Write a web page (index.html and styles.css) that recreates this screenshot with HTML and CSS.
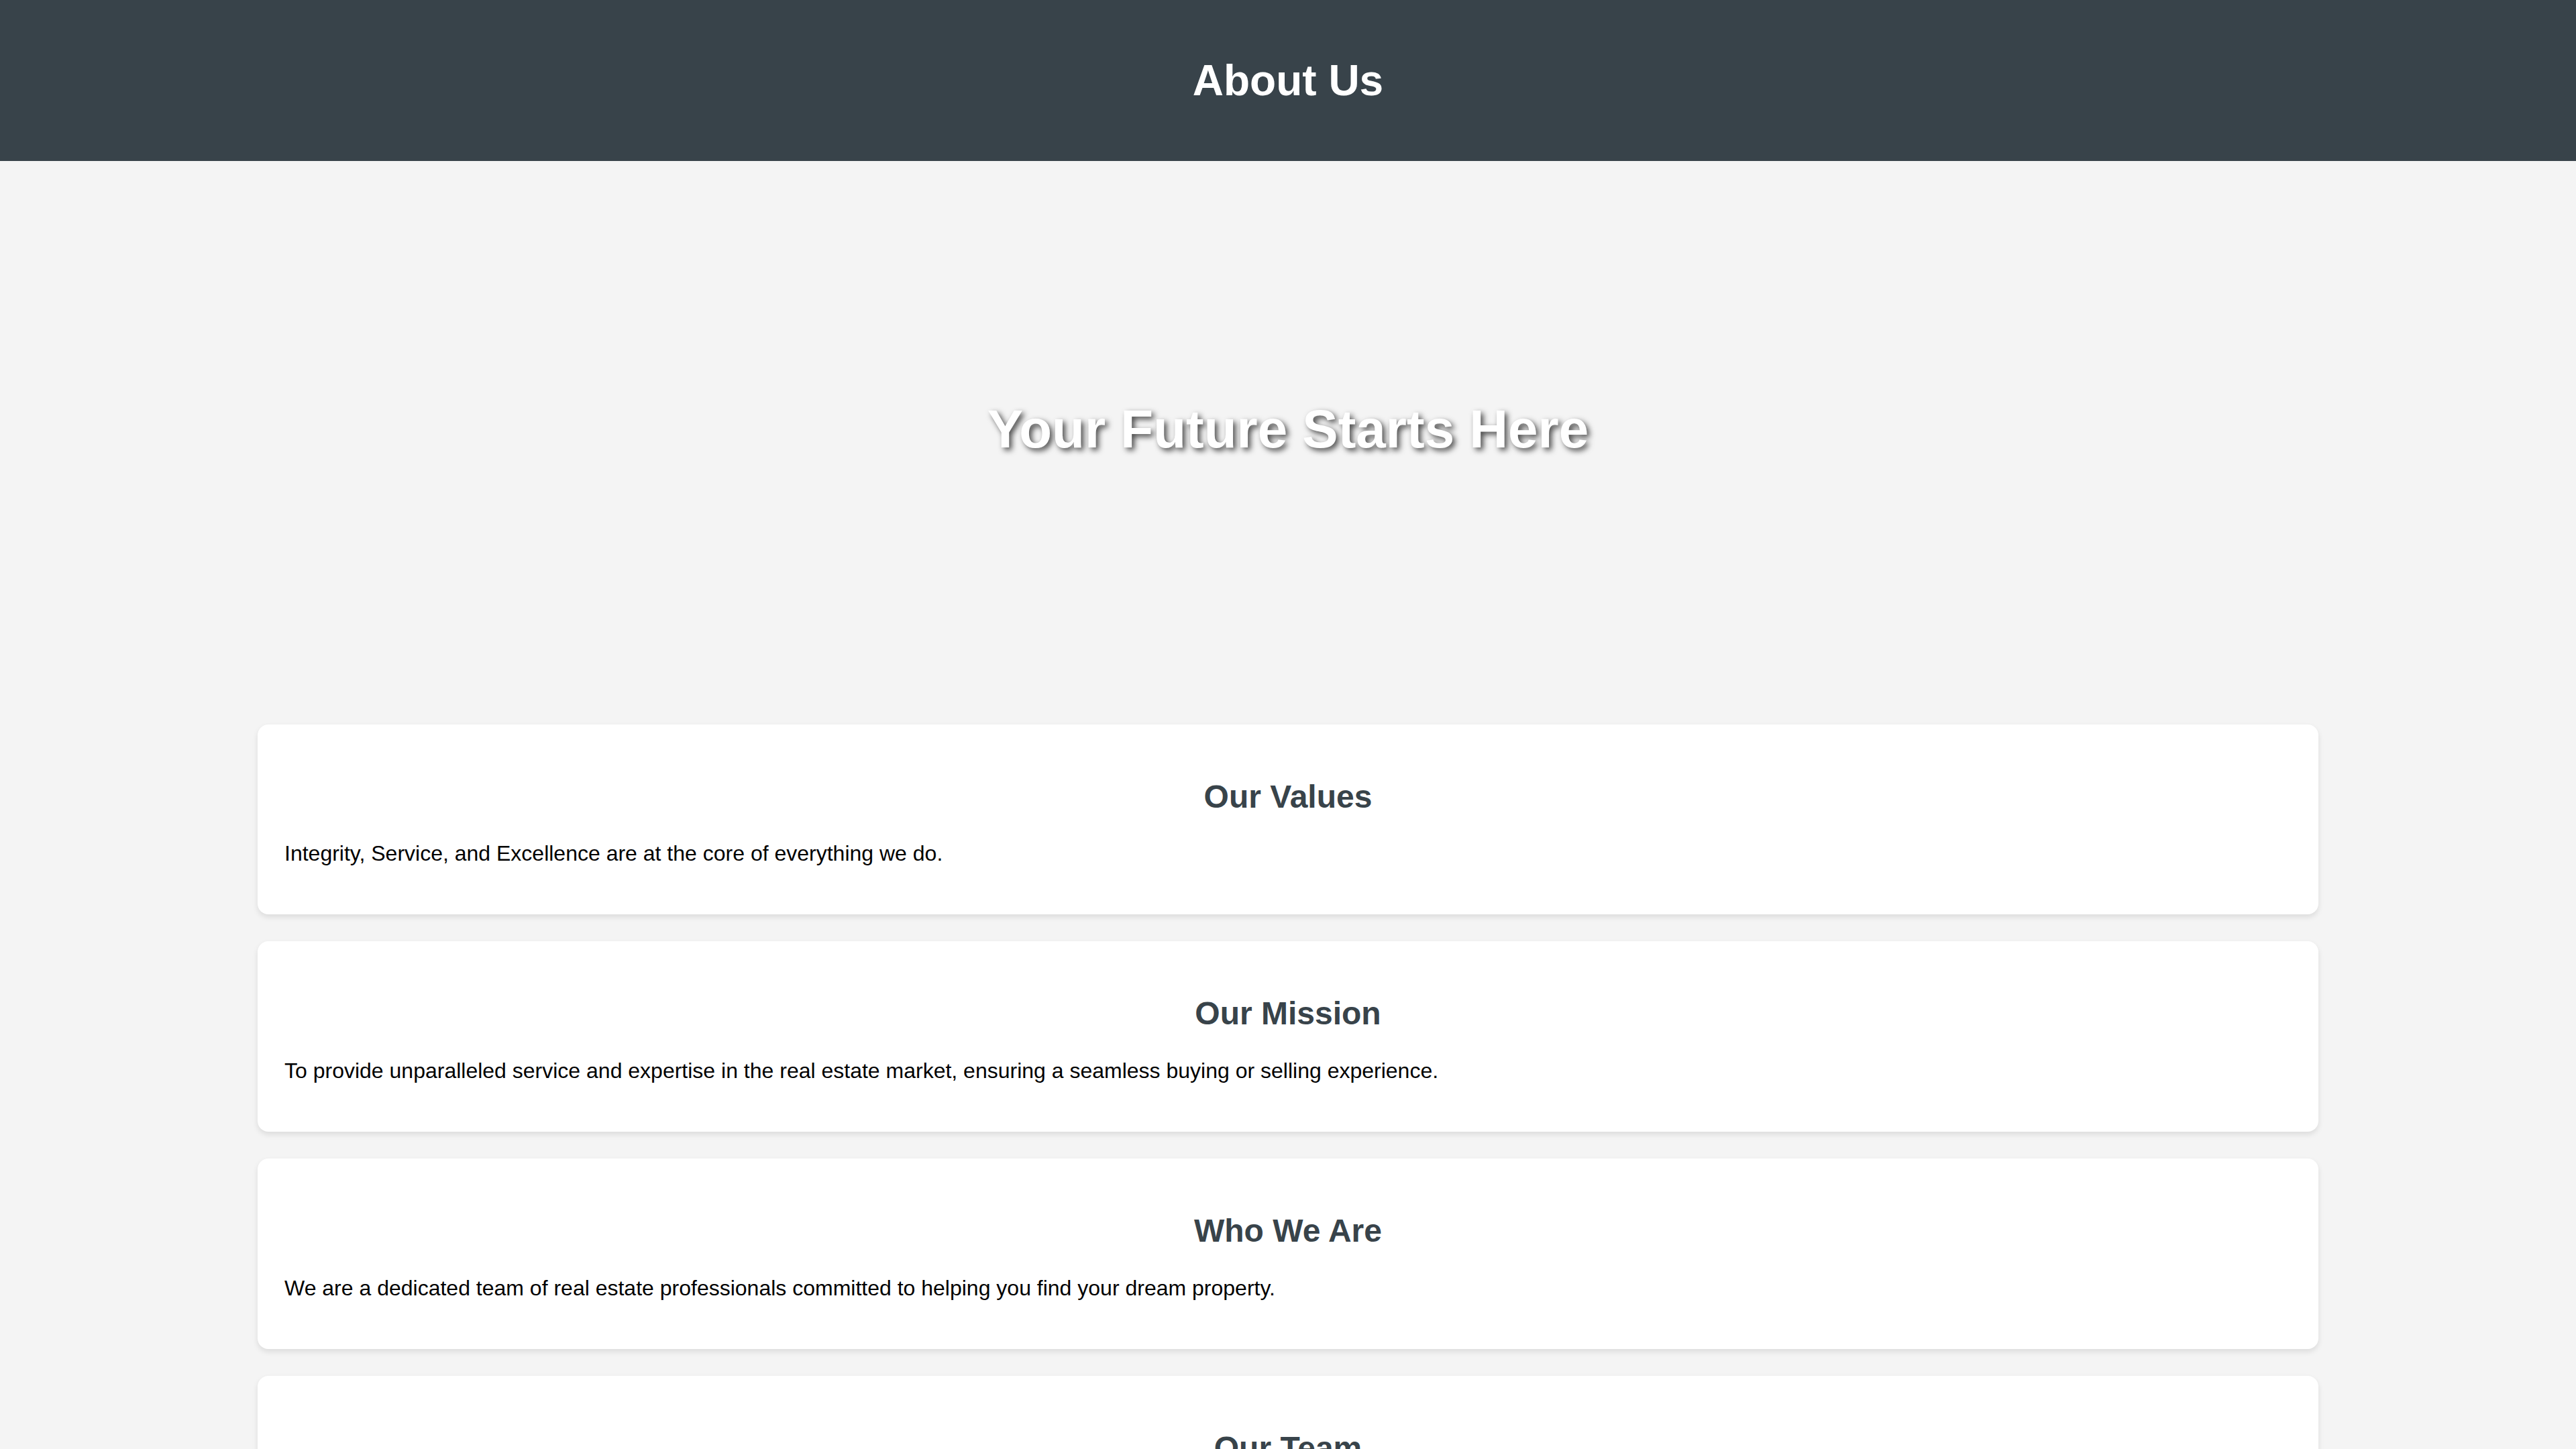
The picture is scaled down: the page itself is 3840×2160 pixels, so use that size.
FILE: index.html
```html
<!DOCTYPE html>
<html lang="en">
<head>
<meta charset="utf-8">
<title>About Us</title>
<link rel="stylesheet" href="styles.css">
</head>
<body>
<header class="site-header">
  <h1>About Us</h1>
</header>
<section class="hero">
  <h2 class="hero-title">Your Future Starts Here</h2>
</section>
<main class="content">
  <section class="card">
    <h2>Our Values</h2>
    <p>Integrity, Service, and Excellence are at the core of everything we do.</p>
  </section>
  <section class="card">
    <h2>Our Mission</h2>
    <p>To provide unparalleled service and expertise in the real estate market, ensuring a seamless buying or selling experience.</p>
  </section>
  <section class="card">
    <h2>Who We Are</h2>
    <p>We are a dedicated team of real estate professionals committed to helping you find your dream property.</p>
  </section>
  <section class="card">
    <h2>Our Team</h2>
    <p>Our experienced agents bring local knowledge and dedication to every client relationship.</p>
  </section>
</main>
</body>
</html>
```

FILE: styles.css
```css
html, body {
  margin: 0;
  padding: 0;
}

body {
  background: #f4f4f4;
  font-family: "Liberation Sans", Arial, sans-serif;
  font-size: 32px;
  color: #000;
}

.site-header {
  background: #38434a;
  color: #fff;
  text-align: center;
  padding: 40px 0;
}

.site-header h1 {
  margin: 42.88px 0;
  font-size: 64px;
  font-weight: bold;
}

.hero {
  height: 800px;
  display: flex;
  align-items: center;
  justify-content: center;
  background: #f4f4f4;
}

.hero-title {
  margin: 0;
  color: #fff;
  font-size: 80px;
  font-weight: bold;
  text-shadow: 4px 4px 8px rgba(0, 0, 0, 0.7);
}

.content {
  display: block;
}

.card {
  width: 80%;
  margin: 40px auto;
  padding: 40px;
  box-sizing: border-box;
  background: #fff;
  border-radius: 16px;
  box-shadow: 0 4px 8px rgba(0, 0, 0, 0.1);
}

.card h2 {
  margin: 39.84px 0;
  font-size: 48px;
  color: #38434a;
  text-align: center;
}

.card p {
  margin: 32px 0;
  font-size: 32px;
}
```
